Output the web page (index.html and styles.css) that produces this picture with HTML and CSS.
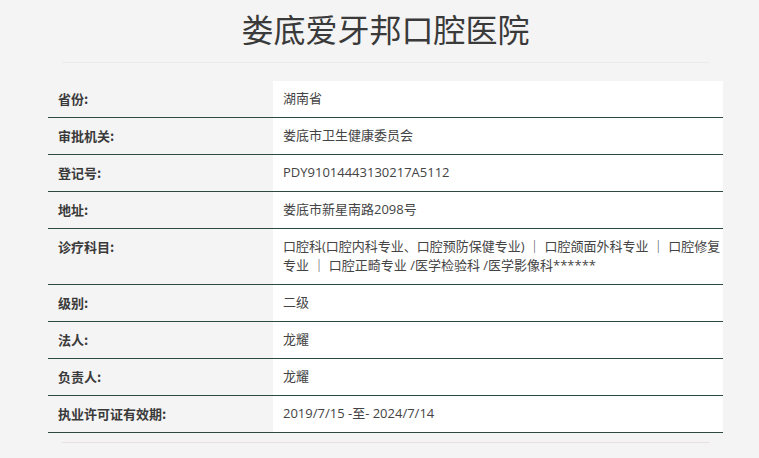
FILE: index.html
```html
<!DOCTYPE html>
<html lang="zh-CN">
<head>
<meta charset="utf-8">
<title>娄底爱牙邦口腔医院</title>
<link rel="stylesheet" href="styles.css">
</head>
<body>
<div class="page">
  <h1 class="title">娄底爱牙邦口腔医院</h1>
  <div class="rule"></div>
  <div class="info">
    <div class="row"><div class="label">省份:</div><div class="value">湖南省</div></div>
    <div class="row"><div class="label">审批机关:</div><div class="value">娄底市卫生健康委员会</div></div>
    <div class="row"><div class="label">登记号:</div><div class="value">PDY91014443130217A5112</div></div>
    <div class="row"><div class="label">地址:</div><div class="value">娄底市新星南路2098号</div></div>
    <div class="row"><div class="label">诊疗科目:</div><div class="value">口腔科(口腔内科专业、口腔预防保健专业) ｜ 口腔颌面外科专业 ｜ 口腔修复专业 ｜ 口腔正畸专业 /医学检验科 /医学影像科******</div></div>
    <div class="row"><div class="label">级别:</div><div class="value">二级</div></div>
    <div class="row"><div class="label">法人:</div><div class="value">龙耀</div></div>
    <div class="row"><div class="label">负责人:</div><div class="value">龙耀</div></div>
    <div class="row"><div class="label">执业许可证有效期:</div><div class="value">2019/7/15 -至- 2024/7/14</div></div>
  </div>
  <div class="rule rule-bottom"></div>
</div>
</body>
</html>
```
FILE: styles.css
```css
html, body {
  margin: 0;
  padding: 0;
  background: #f4f4f4;
}
body {
  font-family: "Open Sans", "Noto Sans CJK SC", sans-serif;
  color: #333;
}
.page {
  width: 675px;
  margin: 0 0 0 48px;
  padding-top: 8px;
}
.title {
  margin: 0;
  text-align: center;
  font-family: "Noto Sans CJK SC", sans-serif;
  font-weight: 400;
  font-size: 32px;
  line-height: 40px;
  color: #3a3a3a;
}
.rule {
  margin: 14px 14px 0;
  height: 1px;
  background: #ebebeb;
}
.info {
  margin-top: 18px;
}
.row {
  display: flex;
  border-bottom: 1px solid #2c4b3d;
}
.label {
  width: 225px;
  flex: none;
  box-sizing: border-box;
  padding: 8px 10px 9px;
  font-family: "Noto Sans CJK SC", sans-serif;
  font-weight: 700;
  font-size: 13px;
  line-height: 19px;
  color: #3a3a3a;
  background: #f4f4f4;
}
.value {
  flex: 1;
  padding: 8px 0 9px 10px;
  font-size: 13px;
  line-height: 19px;
  color: #444;
  background: #fff;
}
.rule-bottom {
  margin-top: 9px;
  background: #e9dfdf;
}
```
